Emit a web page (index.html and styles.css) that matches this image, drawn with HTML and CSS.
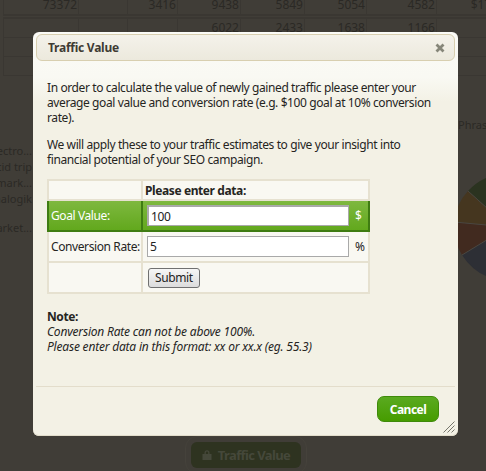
FILE: index.html
```html
<!DOCTYPE html>
<html lang="en">
<head>
<meta charset="utf-8">
<title>Traffic Value</title>
<link rel="stylesheet" href="styles.css">
</head>
<body>
<div class="page">
  <table class="bg-table">
    <colgroup><col class="c1"><col class="c2"><col class="c3"><col class="c4"><col class="c5"><col class="c6"><col class="c7"><col class="c8"></colgroup>
    <tr class="first"><td>73372</td><td></td><td>3416</td><td>9438</td><td>5849</td><td>5054</td><td>4582</td><td>$1708</td></tr>
    <tr><td></td><td></td><td></td><td>6022</td><td>2433</td><td>1638</td><td>1166</td><td></td></tr>
    <tr><td></td><td></td><td></td><td></td><td></td><td></td><td></td><td></td></tr>
    <tr><td></td><td></td><td></td><td></td><td></td><td></td><td></td><td></td></tr>
  </table>
  <ul class="bg-list">
    <li>electro...</li>
    <li>acid trip</li>
    <li>e-mark...</li>
    <li>analogik</li>
    <li class="gap">market...</li>
  </ul>
  <span class="bg-phrase">Phrases</span>
  <svg class="bg-pie" width="108" height="108" viewBox="-54 -54 108 108" aria-hidden="true">
    <path d="M0 0L-40 -36A54 54 0 0 1 54 0Z" fill="#2b3320"/>
    <path d="M0 0L-54 -5A54 54 0 0 1 -40 -36Z" fill="#45361f"/>
    <path d="M0 0L-46 28A54 54 0 0 1 -54 -5Z" fill="#412a1f"/>
    <path d="M0 0L54 0A54 54 0 0 1 -46 28Z" fill="#2d2f35"/>
    <path d="M0 0L-40 -36M0 0L-54 -5M0 0L-46 28" stroke="#4a4741" stroke-width="1" fill="none"/>
  </svg>
  <div class="bg-button">
    <svg width="10" height="10" viewBox="0 0 10 10" aria-hidden="true"><path d="M2.500 4V2.800a2.500 2.500 0 0 1 5 0V4H6.200V2.800a1.200 1.200 0 0 0-2.400 0V4zM0.500 4h9v6h-9z" fill="#45483a"/></svg>
    <span>Traffic Value</span>
  </div>

  <section class="dialog">
    <header class="titlebar">
      <h1>Traffic Value</h1>
      <svg class="close" width="10" height="10" viewBox="0 0 10 10" aria-hidden="true"><path d="M1.500 1.500l7 7M8.500 1.500l-7 7" stroke="#868679" stroke-width="2.800"/></svg>
    </header>
    <div class="content">
      <p>In order to calculate the value of newly gained traffic please enter your average goal value and conversion rate (e.g. $100 goal at 10% conversion rate).</p>
      <p>We will apply these to your traffic estimates to give your insight into financial potential of your SEO campaign.</p>
      <table class="data">
        <colgroup><col class="col-label"><col class="col-field"><col class="col-unit"></colgroup>
        <tr class="r-head"><td class="label"></td><th colspan="2">Please enter data:</th></tr>
        <tr class="r-active"><td class="label">Goal Value:</td><td class="field"><input type="text" value="100"></td><td class="unit">$</td></tr>
        <tr class="r-plain"><td class="label">Conversion Rate:</td><td class="field"><input type="text" value="5"></td><td class="unit">%</td></tr>
        <tr class="r-plain"><td class="label"></td><td colspan="2" class="submit"><button type="button">Submit</button></td></tr>
      </table>
      <div class="note">
        <strong>Note:</strong>
        <em>Conversion Rate can not be above 100%.</em>
        <em>Please enter data in this format: xx or xx.x (eg. 55.3)</em>
      </div>
    </div>
    <footer class="actions">
      <button type="button" class="cancel">Cancel</button>
    </footer>
    <svg class="grip" width="12" height="12" viewBox="0 0 12 12" aria-hidden="true"><path d="M0.500 11.500L11.500 0.500M4.500 11.500L11.500 4.500M8.500 11.500L11.500 8.500" stroke="#77776c" stroke-width="1"/></svg>
  </section>
</div>
</body>
</html>
```
FILE: styles.css
```css
html, body { margin: 0; padding: 0; }
body {
  background: #403d37;
  font-family: "Noto Sans", Tahoma, sans-serif;
  font-size: 12px;
  color: #26251f;
}
.page { position: relative; width: 486px; height: 471px; overflow: hidden; }

.bg-table { border-collapse: collapse; table-layout: fixed; width: 503px; margin: -5px 0 0 3px; color: #2b2925; font-size: 12px; }
.bg-table td { border: 1px solid #3a3732; height: 18px; padding: 0 1px 0 0; text-align: right; line-height: 18px; }
.bg-table .first td { height: 17px; border-bottom: 5px double #3a3732; }
.c1 { width: 75px; } .c2 { width: 49px; } .c3 { width: 50px; } .c4 { width: 63px; }
.c5 { width: 64px; } .c6 { width: 62px; } .c7 { width: 70px; } .c8 { width: 70px; }

.bg-list { position: absolute; left: -20px; top: 143px; width: 52px; margin: 0; padding: 0; list-style: none; color: #2b2925; font-size: 11px; line-height: 16px; white-space: nowrap; text-align: right; }
.bg-list .gap { margin-top: 13px; }
.bg-phrase { position: absolute; left: 458px; top: 117px; color: #2b2925; font-size: 11px; }
.bg-pie { position: absolute; left: 454px; top: 173px; }
.bg-button { position: absolute; left: 191px; top: 442px; width: 110px; height: 26px; border-radius: 6px; background: #2e3320; outline: 1px solid #45423b; outline-offset: 5px; display: flex; align-items: center; justify-content: center; gap: 6px; color: #45483a; font-weight: bold; font-size: 13px; letter-spacing: -0.6px; }

.dialog { position: absolute; left: 33px; top: 32px; width: 425px; height: 404px; box-sizing: border-box; border-radius: 6px; padding: 2px 3px 0; background: linear-gradient(#fbfbf6 0, #f9f9f3 45px, #f3f1e5 70px, #f3f1e5 100%); box-shadow: inset 0 -1px #e2ddcb; display: flex; flex-direction: column; letter-spacing: -0.4px; }
.titlebar { height: 27px; flex: none; box-sizing: border-box; border: 1px solid #d8cfb0; border-radius: 6px; background: linear-gradient(#f4f2ea, #ece9dd); display: flex; align-items: center; justify-content: space-between; padding: 0 9px 0 11px; }
.titlebar h1 { margin: 0; font-size: 12px; font-weight: bold; color: #3f3b33; letter-spacing: -0.25px; }
.close { flex: none; }

.content { flex: 1; padding: 19px 11px 0; line-height: 15px; }
.content p { margin: 0 0 12px; }
.data { border-collapse: collapse; width: 321px; table-layout: fixed; margin-top: 10px; }
.col-label { width: 94px; } .col-field { width: 209px; } .col-unit { width: 18px; }
.data td, .data th { border: 2px solid #e6e1d0; background: #f9f8f2; padding: 0; }
.data .label { padding-left: 2px; white-space: nowrap; }
.data th { text-align: left; font-weight: bold; padding-left: 2px; }
.r-head td, .r-head th { height: 18px; }
.r-active td, .r-plain td { height: 29px; }
.data .r-active td { background: linear-gradient(#7eb83f, #62a81d); border-color: #3f7c12; color: #fff; }
.data .field { border-right: 0; padding-left: 4px; }
.data .unit { border-left: 0; padding-left: 4px; }
.field input { display: block; box-sizing: border-box; width: 202px; height: 21px; border: 1px solid #a9a9a9; padding: 1px 2px; background: #fff; font: inherit; letter-spacing: inherit; color: #222; }
.r-active .field input { border-width: 2px 1px 1px 2px; }
.data .submit { padding-left: 5px; }
.submit button { display: block; height: 20px; padding: 0 6px; border: 1px solid #707070; border-radius: 3px; background: linear-gradient(#f6f6f6, #dcdcdc); font: inherit; letter-spacing: inherit; color: #222; }
.note { margin-top: 15px; }
.note strong, .note em { display: block; }
.note em { letter-spacing: -0.2px; }

.actions { flex: none; height: 40px; border-top: 1px solid #e3ddcb; display: flex; justify-content: flex-end; padding: 9px 16px 0 0; }
.cancel { width: 62px; height: 26px; border: 1px solid #3f8a0a; border-radius: 7px; background: linear-gradient(#5aaa20, #469c00); color: #fff; font: inherit; font-weight: bold; font-size: 12px; letter-spacing: -0.5px; padding: 0; }
.grip { position: absolute; right: 3px; bottom: 3px; }
```
